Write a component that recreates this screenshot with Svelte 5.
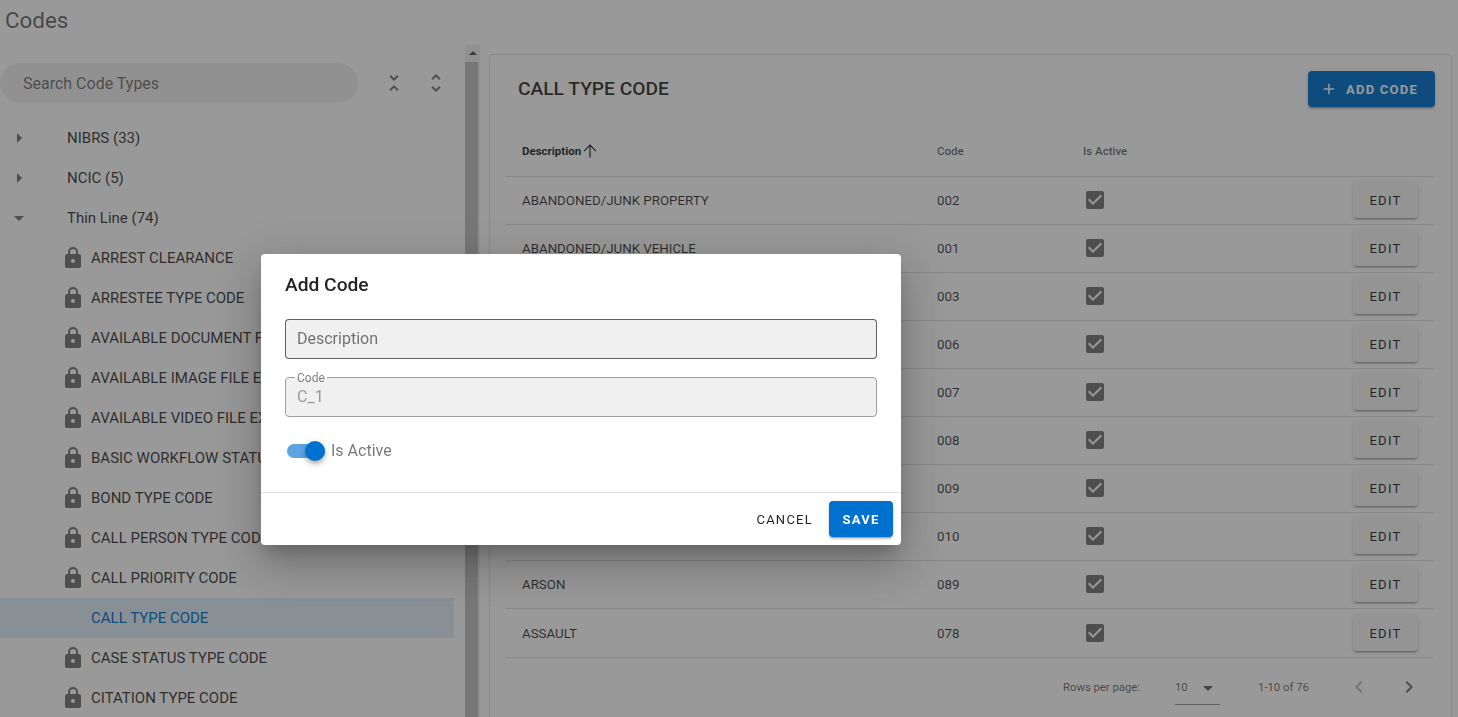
<script>
  const icons = {
    less: "M16.59,5.41L15.17,4L12,7.17L8.83,4L7.41,5.41L12,10L16.59,5.41M7.41,18.59L8.83,20L12,16.83L15.17,20L16.58,18.59L12,14L7.41,18.59Z",
    more: "M12,18.17L8.83,15L7.42,16.41L12,21L16.59,16.41L15.17,15M12,5.83L15.17,9L16.58,7.59L12,3L7.41,7.59L8.83,9L12,5.83Z",
    lock: "M12,17A2,2 0 0,0 14,15C14,13.89 13.1,13 12,13A2,2 0 0,0 10,15A2,2 0 0,0 12,17M18,8A2,2 0 0,1 20,10V20A2,2 0 0,1 18,22H6A2,2 0 0,1 4,20V10C4,8.89 4.9,8 6,8H7V6A5,5 0 0,1 12,1A5,5 0 0,1 17,6V8H18M12,3A3,3 0 0,0 9,6V8H15V6A3,3 0 0,0 12,3Z",
    right: "M10,17L15,12L10,7V17Z",
    down: "M7,10L12,15L17,10H7Z",
    check: "M10,17L5,12L6.41,10.58L10,14.17L17.59,6.58L19,8M19,3H5C3.89,3 3,3.89 3,5V19A2,2 0 0,0 5,21H19A2,2 0 0,0 21,19V5C21,3.89 20.1,3 19,3Z",
    prev: "M15.41,16.58L10.83,12L15.41,7.41L14,6L8,12L14,18L15.41,16.58Z",
    next: "M8.59,16.58L13.17,12L8.59,7.41L10,6L16,12L10,18L8.59,16.58Z",
    plus: "M19,13H13V19H11V13H5V11H11V5H13V11H19V13Z"
  };

  const roots = [
    { name: "NIBRS (33)", open: false },
    { name: "NCIC (5)", open: false },
    { name: "Thin Line (74)", open: true }
  ];

  const types = [
    "ARREST CLEARANCE",
    "ARRESTEE TYPE CODE",
    "AVAILABLE DOCUMENT FILE EXTENSION",
    "AVAILABLE IMAGE FILE EXTENSION",
    "AVAILABLE VIDEO FILE EXTENSION",
    "BASIC WORKFLOW STATUS",
    "BOND TYPE CODE",
    "CALL PERSON TYPE CODE",
    "CALL PRIORITY CODE",
    "CALL TYPE CODE",
    "CASE STATUS TYPE CODE",
    "CITATION TYPE CODE"
  ];

  const rows = [
    ["ABANDONED/JUNK PROPERTY", "002"],
    ["ABANDONED/JUNK VEHICLE", "001"],
    ["ALARM", "003"],
    ["ANIMAL COMPLAINT", "006"],
    ["ANIMAL CRUELTY", "007"],
    ["ANIMAL ATTACK", "008"],
    ["ANIMAL NOISE", "009"],
    ["ANIMAL STRAY", "010"],
    ["ARSON", "089"],
    ["ASSAULT", "078"]
  ];
</script>

{#snippet icon(d, size = 24)}
  <svg class="icon" width={size} height={size} viewBox="0 0 24 24" fill="currentColor"><path {d} /></svg>
{/snippet}

<div class="page">
  <h1>Codes</h1>
  <div class="columns">
    <aside class="side">
      <div class="tree">
        <div class="search-row">
          <div class="search">Search Code Types</div>
          <span class="tool">{@render icon(icons.less)}</span>
          <span class="tool">{@render icon(icons.more)}</span>
        </div>
        <ul class="nodes">
          {#each roots as root}
            <li class="node">
              <span class="caret">{@render icon(root.open ? icons.down : icons.right)}</span>
              <span class="root-name">{root.name}</span>
            </li>
          {/each}
          {#each types as type}
            <li class="node child" class:active={type === "CALL TYPE CODE"}>
              <span class="lock">
                {#if type !== "CALL TYPE CODE"}{@render icon(icons.lock)}{/if}
              </span>
              <span class="child-name">{type}</span>
            </li>
          {/each}
        </ul>
      </div>
      <div class="scrollbar">
        <div class="scroll-btn"></div>
        <div class="scroll-thumb"></div>
      </div>
    </aside>

    <main class="card">
      <header class="card-head">
        <h2>CALL TYPE CODE</h2>
        <button class="btn primary add">{@render icon(icons.plus, 18)}<span>ADD CODE</span></button>
      </header>
      <table>
        <thead>
          <tr>
            <th class="strong">
              <span class="th-wrap">
                Description
                <svg class="icon" width="14" height="14" viewBox="0 0 14 14" fill="none" stroke="currentColor" stroke-width="1.2">
                  <path d="M7 13.5V1.2M1 7.2L7 1.2L13 7.2" />
                </svg>
              </span>
            </th>
            <th>Code</th>
            <th>Is Active</th>
            <th></th>
          </tr>
        </thead>
        <tbody>
          {#each rows as row}
            <tr>
              <td>{row[0]}</td>
              <td>{row[1]}</td>
              <td class="check">{@render icon(icons.check)}</td>
              <td class="actions"><button class="btn edit">EDIT</button></td>
            </tr>
          {/each}
        </tbody>
      </table>
      <footer class="pager">
        <span class="rows-label">Rows per page:</span>
        <span class="rows-select"><span>10</span>{@render icon(icons.down)}</span>
        <span class="range">1-10 of 76</span>
        <span class="nav off">{@render icon(icons.prev)}</span>
        <span class="nav">{@render icon(icons.next)}</span>
      </footer>
    </main>
  </div>
</div>

<div class="overlay"></div>

<div class="dialog">
  <div class="dialog-title">Add Code</div>
  <div class="dialog-body">
    <div class="field dark"><span class="placeholder">Description</span></div>
    <div class="field">
      <span class="float">Code</span>
      <span class="value">C_1</span>
    </div>
    <div class="switch-row">
      <span class="switch"><span class="track"></span><span class="thumb"></span></span>
      <span class="switch-label">Is Active</span>
    </div>
  </div>
  <div class="dialog-actions">
    <button class="btn text">CANCEL</button>
    <button class="btn save">SAVE</button>
  </div>
</div>

<style>
  :global(body) {
    overflow: hidden;
    background: #fff;
    font-family: Roboto, "Liberation Sans", sans-serif;
    color: rgba(0, 0, 0, 0.87);
  }

  .page {
    height: 717px;
    overflow: hidden;
  }

  h1 {
    margin: 0;
    height: 45px;
    padding: 6px 0 0 5px;
    box-sizing: border-box;
    font-size: 22.4px;
    line-height: 28px;
    font-weight: 400;
    color: rgba(0, 0, 0, 0.6);
  }

  .columns {
    display: flex;
    align-items: flex-start;
    padding-right: 6px;
  }

  .icon {
    display: block;
  }

  /* Left tree */
  .side {
    width: 480px;
    height: 672px;
    flex: none;
    display: flex;
    overflow: hidden;
  }

  .tree {
    width: 465px;
    flex: none;
  }

  .search-row {
    display: flex;
    align-items: center;
    height: 40px;
    margin-top: 18px;
  }

  .search {
    width: 358px;
    height: 40px;
    flex: none;
    box-sizing: border-box;
    padding: 1px 0 0 23px;
    border-radius: 20px;
    background: rgba(0, 0, 0, 0.06);
    color: rgba(0, 0, 0, 0.55);
    font-size: 16px;
    line-height: 40px;
  }

  .tool {
    margin-left: 24px;
    color: rgba(0, 0, 0, 0.54);
  }

  .tool + .tool {
    margin-left: 18px;
  }

  .nodes {
    list-style: none;
    margin: 15px 0 0;
    padding: 0;
    width: 454px;
  }

  .node {
    display: flex;
    align-items: center;
    height: 40px;
    font-size: 15px;
    color: rgba(0, 0, 0, 0.8);
  }

  .caret {
    width: 24px;
    margin-left: 7px;
    color: rgba(0, 0, 0, 0.54);
  }

  .root-name {
    margin-left: 36px;
  }

  .lock {
    width: 24px;
    height: 24px;
    margin-left: 61px;
    color: rgba(0, 0, 0, 0.54);
  }

  .child-name {
    margin-left: 6px;
    white-space: nowrap;
  }

  .active {
    background: rgba(0, 113, 206, 0.12);
    color: #0071ce;
  }

  .scrollbar {
    width: 15px;
    background: #f1f1f1;
    display: flex;
    flex-direction: column;
  }

  .scroll-btn {
    height: 17px;
    position: relative;
  }

  .scroll-btn::after {
    content: "";
    position: absolute;
    left: 4px;
    top: 6px;
    border: 4px solid transparent;
    border-top: 0;
    border-bottom: 4px solid #505050;
  }

  .scroll-thumb {
    flex: 1;
    margin-right: 2px;
    background: #c1c1c1;
  }

  /* Right card */
  .card {
    flex: 1;
    margin: 9px 0 0 9px;
    height: 680px;
    box-sizing: border-box;
    padding: 16px 16px 0 16px;
    border: 1px solid #e0e0e0;
    border-radius: 4px;
  }

  .card-head {
    display: flex;
    align-items: center;
    justify-content: space-between;
    height: 36px;
    padding: 0 0 0 12px;
  }

  h2 {
    margin: -2px 0 0;
    font-size: 19.2px;
    font-weight: 500;
    color: rgba(0, 0, 0, 0.82);
  }

  .btn {
    border: 0;
    padding: 1px 0 0;
    font-family: inherit;
    font-weight: 500;
    font-size: 13px;
    letter-spacing: 1.25px;
    border-radius: 4px;
  }

  .primary {
    background: #0071ce;
    color: #fff;
    font-weight: 700;
    box-shadow: 0 3px 1px -2px rgba(0, 0, 0, 0.2), 0 2px 2px rgba(0, 0, 0, 0.14), 0 1px 5px rgba(0, 0, 0, 0.12);
  }

  .add {
    display: flex;
    align-items: center;
    gap: 8px;
    width: 127px;
    height: 36px;
    padding: 0 0 0 12px;
    box-sizing: border-box;
  }

  table {
    width: 928px;
    margin-top: 21px;
    border-collapse: collapse;
    table-layout: fixed;
    font-size: 13.3px;
  }

  th {
    height: 46px;
    padding: 0 16px 2px;
    text-align: left;
    font-size: 11.5px;
    font-weight: 500;
    color: rgba(0, 0, 0, 0.6);
    border-bottom: 1px solid #e0e0e0;
  }

  th:nth-child(1) { width: 383px; }
  th:nth-child(2) { width: 114px; }
  th:nth-child(3) { width: 200px; }

  th.strong {
    color: rgba(0, 0, 0, 0.87);
    font-weight: 700;
  }

  .th-wrap {
    display: flex;
    align-items: center;
    gap: 2px;
  }

  td {
    height: 47px;
    padding: 0 16px;
    border-bottom: 1px solid #e0e0e0;
    color: rgba(0, 0, 0, 0.78);
  }

  tr:last-child td {
    height: 48px;
  }

  td.check,
  td.actions {
    height: 46px;
    padding-bottom: 1px;
  }

  tr:last-child td.check,
  tr:last-child td.actions {
    height: 48px;
    padding-bottom: 0;
  }

  .check .icon {
    color: rgba(0, 0, 0, 0.54);
  }

  .edit {
    display: block;
    margin-left: auto;
    width: 65px;
    height: 36px;
    padding: 0;
    background: #f5f5f5;
    color: rgba(0, 0, 0, 0.87);
    font-weight: 400;
    box-shadow: 0 3px 1px -2px rgba(0, 0, 0, 0.2), 0 2px 2px rgba(0, 0, 0, 0.14), 0 1px 5px rgba(0, 0, 0, 0.12);
  }

  .pager {
    display: flex;
    align-items: center;
    height: 58px;
    font-size: 11.3px;
    color: rgba(0, 0, 0, 0.6);
    padding-left: 557px;
  }

  .rows-label {
    width: 78px;
    white-space: nowrap;
  }

  .rows-select {
    display: flex;
    align-items: center;
    justify-content: space-between;
    width: 45px;
    height: 33px;
    margin-left: 34px;
    margin-top: 2px;
    border-bottom: 1px solid rgba(0, 0, 0, 0.42);
  }

  .range {
    margin-left: 38px;
    width: 50px;
    white-space: nowrap;
  }

  .nav {
    margin-left: 26px;
    color: rgba(0, 0, 0, 0.54);
  }

  .nav.off {
    margin-left: 39px;
    color: rgba(0, 0, 0, 0.26);
  }

  /* Modal */
  .overlay {
    position: fixed;
    inset: 0;
    background: rgba(33, 33, 33, 0.46);
  }

  .dialog {
    position: fixed;
    left: 261px;
    top: 254px;
    width: 640px;
    height: 291px;
    background: #fff;
    border-radius: 4px;
    box-shadow: 0 11px 15px -7px rgba(0, 0, 0, 0.2), 0 24px 38px 3px rgba(0, 0, 0, 0.14), 0 9px 46px 8px rgba(0, 0, 0, 0.12);
    display: flex;
    flex-direction: column;
  }

  .dialog-title {
    padding: 17px 24px 0;
    height: 49px;
    box-sizing: border-box;
    font-size: 19.2px;
    line-height: 28px;
    font-weight: 500;
  }

  .dialog-body {
    flex: 1;
    padding: 16px 24px 0;
    border-bottom: 1px solid #e0e0e0;
  }

  .field {
    position: relative;
    height: 40px;
    box-sizing: border-box;
    margin-bottom: 18px;
    padding: 0 11px;
    background: #f0f0f0;
    border: 1px solid #9e9e9e;
    border-radius: 4px;
    font-size: 16px;
    line-height: 38px;
    color: rgba(0, 0, 0, 0.38);
  }

  .field.dark {
    border-color: rgba(0, 0, 0, 0.6);
  }

  .placeholder {
    color: rgba(0, 0, 0, 0.54);
  }

  .float {
    position: absolute;
    left: 9px;
    top: -7px;
    padding: 0 2px;
    font-size: 12px;
    line-height: 14px;
    color: rgba(0, 0, 0, 0.5);
    background: linear-gradient(#fff 50%, #f0f0f0 50%);
  }

  .switch-row {
    display: flex;
    align-items: center;
    height: 24px;
    margin-top: 21px;
  }

  .switch {
    position: relative;
    width: 40px;
    height: 20px;
    margin-left: 2px;
  }

  .track {
    position: absolute;
    left: 0;
    right: 2px;
    top: 4px;
    height: 14px;
    border-radius: 7px;
    background: #5ca5e0;
  }

  .thumb {
    position: absolute;
    right: 2px;
    top: 1px;
    width: 20px;
    height: 20px;
    border-radius: 50%;
    background: #0071ce;
    box-shadow: 0 2px 4px -1px rgba(0, 0, 0, 0.2), 0 4px 5px rgba(0, 0, 0, 0.14), 0 1px 10px rgba(0, 0, 0, 0.12);
  }

  .switch-label {
    margin-left: 4px;
    font-size: 16px;
    color: rgba(0, 0, 0, 0.54);
  }

  .dialog-actions {
    display: flex;
    align-items: center;
    justify-content: flex-end;
    height: 52px;
    padding-right: 8px;
    gap: 16px;
  }

  .text {
    background: none;
    color: rgba(0, 0, 0, 0.87);
    font-weight: 400;
  }

  .save {
    width: 64px;
    height: 36px;
    background: #0071ce;
    color: #fff;
    font-weight: 700;
    box-shadow: 0 3px 1px -2px rgba(0, 0, 0, 0.2), 0 2px 2px rgba(0, 0, 0, 0.14), 0 1px 5px rgba(0, 0, 0, 0.12);
  }
</style>
